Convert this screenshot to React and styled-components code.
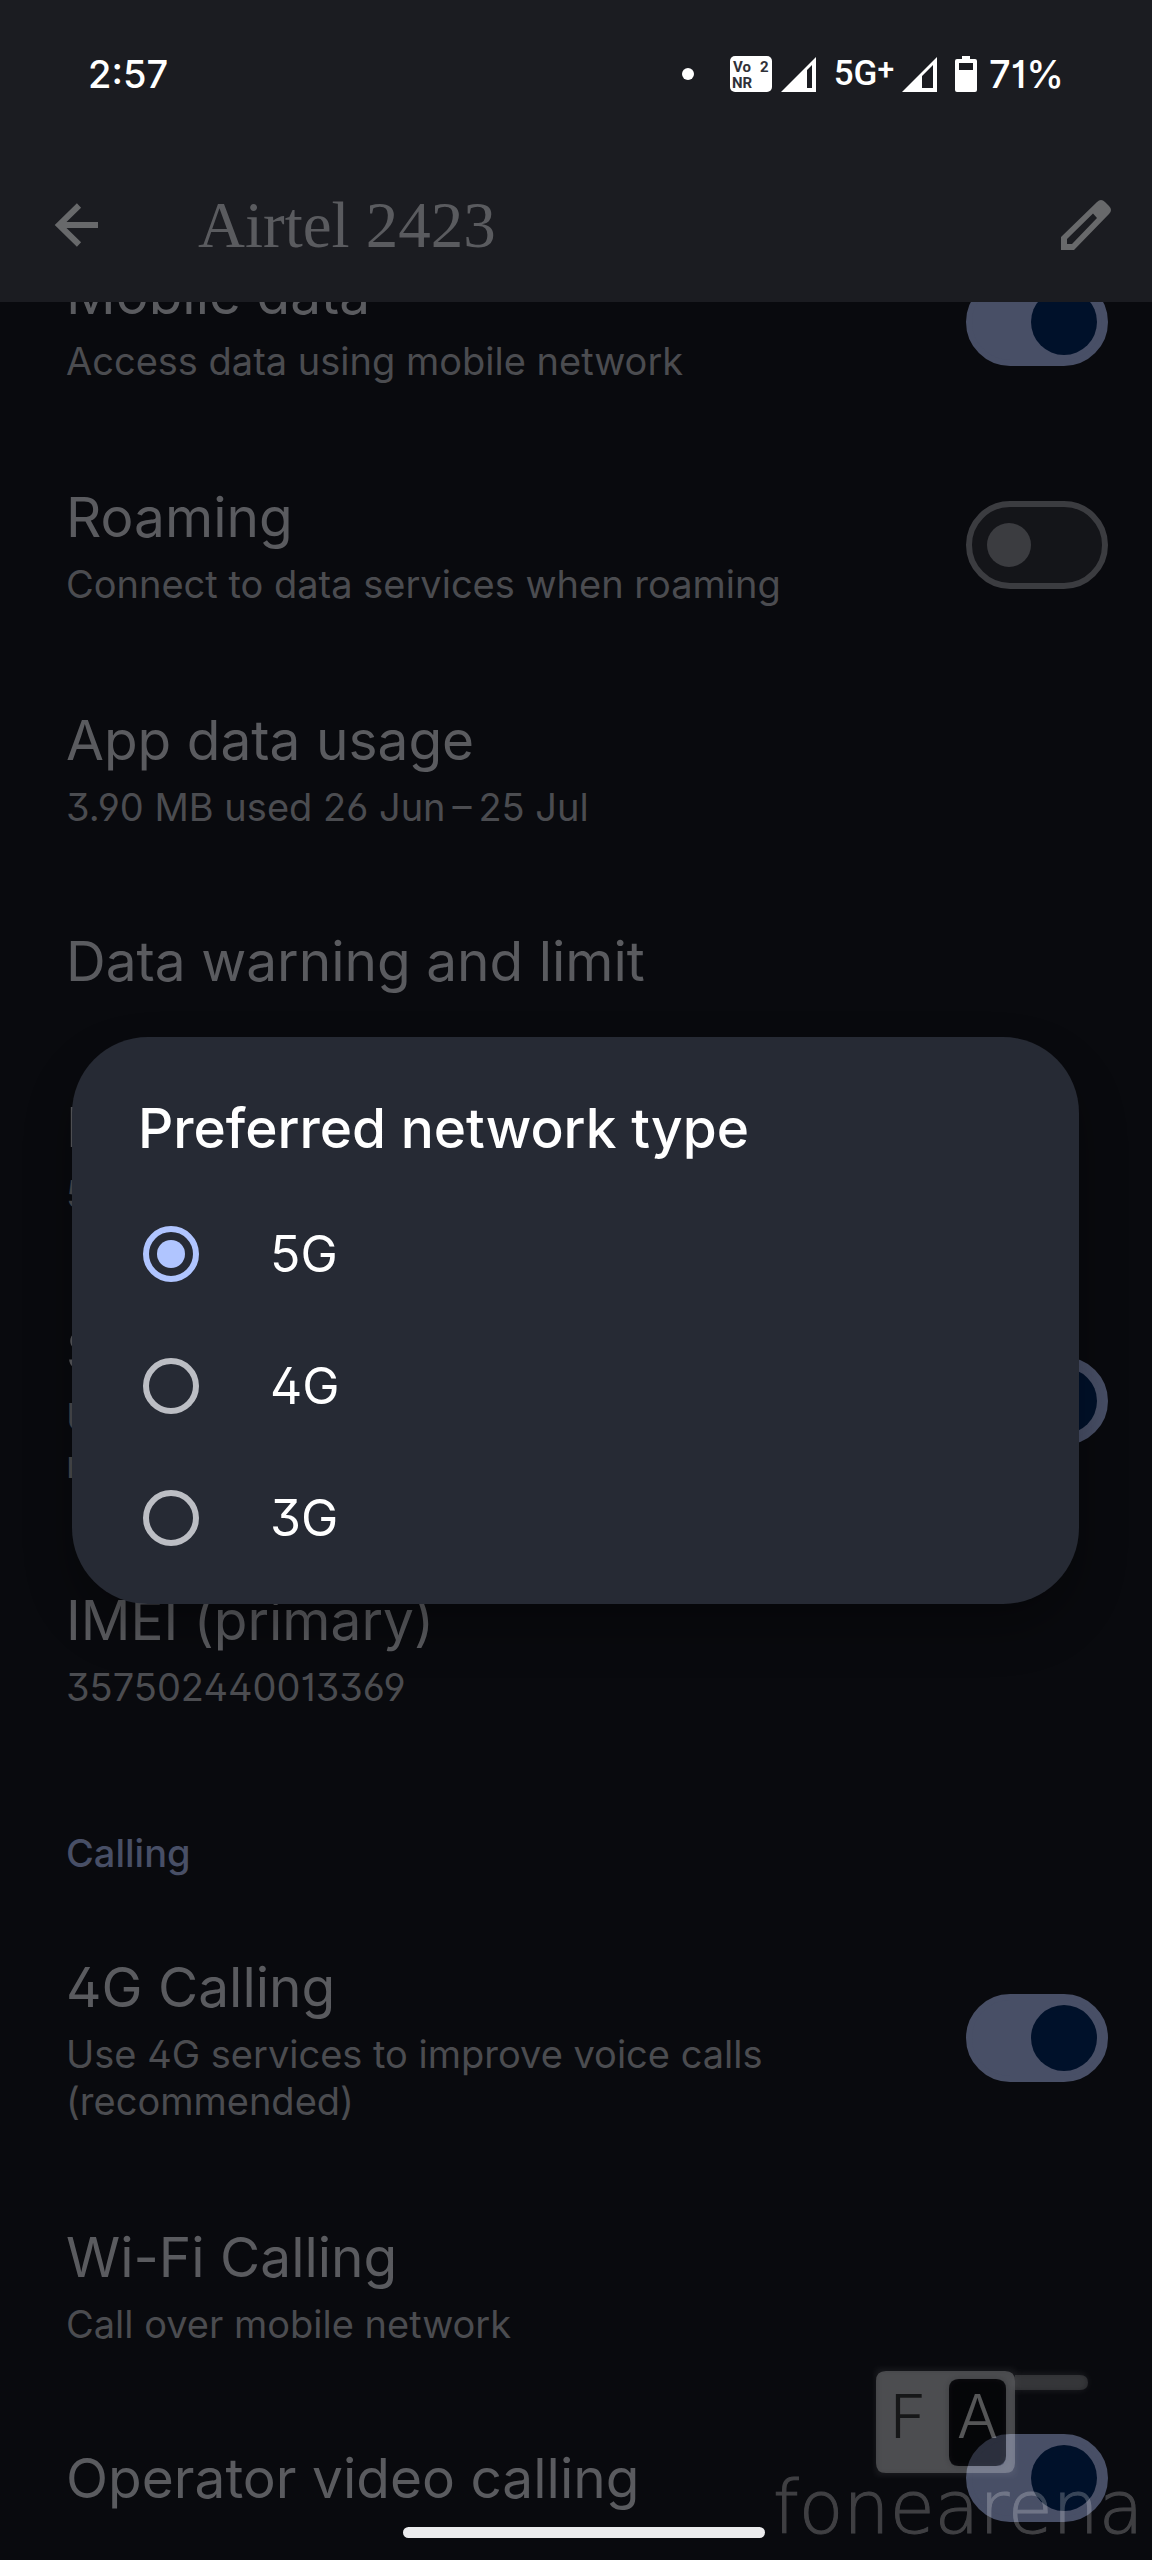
import React, { useState } from 'react'
import styled, { createGlobalStyle, css } from 'styled-components'

const GlobalStyle = createGlobalStyle`
  * {
    box-sizing: border-box;
  }
  body {
    margin: 0;
    background-color: #090a0e;
    font-family: Inter, "Liberation Sans", sans-serif;
    font-feature-settings: "cv01", "cv02", "cv03", "cv04", "cv09";
  }
`

const Page = styled.div`
  position: relative;
  min-height: 100vh;
  overflow: hidden;
  background-color: #090a0e;
`

const Header = styled.header`
  position: sticky;
  top: 0;
  z-index: 1;
  background-color: #1b1c21;
`
const StatusBar = styled.div`
  display: flex;
  align-items: center;
  justify-content: space-between;
  height: 148px;
  padding: 0 88px;
  color: #fff;
  font-size: 38px;
  font-weight: 500;
  line-height: 48px;
`
const StatusIcons = styled.div`
  display: flex;
  align-items: center;
  gap: 36px;
`
const StatusGroup = styled.div`
  display: flex;
  align-items: center;
  gap: ${props => props.$gap}px;
`
const Dot = styled.span`
  width: 12px;
  height: 12px;
  border-radius: 50%;
  background-color: #fff;
`
const NetworkLabel = styled.span`
  display: flex;
  font-family: Roboto, sans-serif;
  font-size: 35px;
`
const Plus = styled.span`
  font-size: 30px;
  line-height: 38px;
`
const AppBar = styled.div`
  display: flex;
  align-items: center;
  height: 154px;
  padding: 0 40px 0 44px;
`
const IconButton = styled.button`
  display: flex;
  padding: 0;
  border: 0;
  background: none;
  color: #68696b;
`
const AppTitle = styled.h1`
  flex: 1;
  margin: 0 0 0 90px;
  color: #5a5b5f;
  font-family: "Liberation Serif", serif;
  font-size: 65px;
  font-weight: 400;
  line-height: 80px;
`

// The list is scrolled a little way under the header
const List = styled.main`
  margin-top: -92px;
`
const rowStyle = css`
  display: flex;
  align-items: center;
  justify-content: space-between;
  gap: 40px;
  width: 100%;
  min-height: 164px;
  padding: ${props => props.$single ? "38px" : "48px"} 44px ${props => props.$single ? "38px" : "48px"} 66px;
`
const LabelRow = styled.label`
  ${rowStyle}
`
const ButtonRow = styled.button`
  ${rowStyle}
  border: 0;
  background: none;
  font: inherit;
  font-feature-settings: inherit;
  text-align: left;
`
const RowText = styled.span`
  display: flex;
  flex-direction: column;
  gap: 8px;
`
const RowTitle = styled.span`
  color: #5a5b5f;
  font-size: 55px;
  line-height: 72px;
`
const RowSummary = styled.span`
  color: #4b4c50;
  font-size: 38px;
  line-height: 47px;
`
const SectionTitle = styled.h2`
  margin: 0;
  padding: 71px 66px 26px;
  color: #484f66;
  font-size: 38px;
  font-weight: 500;
  line-height: 47px;
`
const Switch = styled.input`
  appearance: none;
  flex: none;
  display: flex;
  align-items: center;
  width: 142px;
  height: 88px;
  margin: 0;
  padding: 0 15px;
  border: 6px solid #3b3c40;
  border-radius: 44px;
  background-color: #141519;

  &::before {
    content: "";
    width: 44px;
    height: 44px;
    border-radius: 50%;
    background-color: #3b3c40;
  }
  &:checked {
    justify-content: flex-end;
    padding: 0 5px;
    border-color: #484f66;
    background-color: #484f66;
  }
  &:checked::before {
    width: 66px;
    height: 66px;
    background-color: #00112a;
  }
`

const Overlay = styled.div`
  position: fixed;
  inset: 0;
  z-index: 2;
  display: flex;
  align-items: center;
  padding: 81px 73px 0 72px;
`
const Dialog = styled.fieldset`
  flex: 1;
  min-width: 0;
  margin: 0;
  padding: 55px 0 20px;
  border: 0;
  border-radius: 76px;
  background-color: #262a34;
  box-shadow: 0 24px 48px rgba(0, 0, 0, 0.3);
`
const DialogTitle = styled.h2`
  margin: 0 0 24px;
  padding: 0 66px;
  color: #fff;
  font-size: 55px;
  font-weight: 500;
  line-height: 72px;
`
const Option = styled.label`
  display: flex;
  align-items: center;
  gap: 71px;
  height: 132px;
  padding: 0 71px;
  color: #fff;
  font-size: 50px;
  line-height: 60px;
`
const Radio = styled.input`
  appearance: none;
  display: flex;
  align-items: center;
  justify-content: center;
  width: 56px;
  height: 56px;
  margin: 0;
  border: 6px solid #bcbec4;
  border-radius: 50%;

  &:checked {
    border-color: #b0c5ff;
  }
  &:checked::before {
    content: "";
    width: 28px;
    height: 28px;
    border-radius: 50%;
    background-color: #b0c5ff;
  }
`

const HomeBar = styled.div`
  position: fixed;
  bottom: 22px;
  left: 35%;
  z-index: 3;
  width: 362px;
  height: 11px;
  border-radius: 6px;
  background-color: #ebebed;
`
const Watermark = styled.svg`
  position: fixed;
  right: 0;
  bottom: 0;
  z-index: 3;
  pointer-events: none;
`

const VoNrIcon = () => (
  <svg width="42" height="36" viewBox="0 0 42 36" fontFamily="Roboto, sans-serif" fontSize="15" fontWeight="700" fill="#303138">
    <rect width="42" height="36" rx="5" fill="#fff" />
    <text x="3" y="16">Vo</text>
    <text x="30" y="16">2</text>
    <text x="2" y="32">NR</text>
  </svg>
)

const SignalIcon = ({ level }) => (
  <svg width="35" height="35" viewBox="0 0 35 35">
    <path fill="#fff" fillRule="evenodd" d={`M0 35 35 0V35ZM${level} ${39 - level}V31H31V8Z`} />
  </svg>
)

const BatteryIcon = () => (
  <svg width="22" height="36" viewBox="0 0 22 36">
    <path fill="#fff" fillRule="evenodd" d="M7 0H15V3H20Q22 3 22 5V34Q22 36 20 36H2Q0 36 0 34V5Q0 3 2 3H7ZM4 7V14H18V7Z" />
  </svg>
)

const BackIcon = () => (
  <svg width="64" height="64" viewBox="0 0 64 64" fill="none" stroke="currentColor" strokeWidth="6">
    <path d="M54 32H15M35 12.500 15 32 35 51.500" />
  </svg>
)

const EditIcon = () => (
  <svg width="52" height="52" viewBox="0 0 52 52">
    <path
      fill="currentColor"
      fillRule="evenodd"
      d="M1 51V38L37 3Q41-1 45 3L49 7Q53 11 49 15L14 51ZM7 40V45H12L37 19 33 14.500Z"
    />
  </svg>
)

const rows = [
  { title: "Mobile data", summary: "Access data using mobile network", on: true },
  { title: "Roaming", summary: "Connect to data services when roaming", on: false },
  { title: "App data usage", summary: "3.90 MB used 26 Jun\u2009–\u200925 Jul" },
  { title: "Data warning and limit" },
  { title: "Preferred network type", summary: "5G" },
  { title: "Smart 5G", summary: "Use 5G only when it is needed, which helps reduce battery use", on: true },
  { title: "IMEI (primary)", summary: "357502440013369" },
]

const callingRows = [
  { title: "4G Calling", summary: "Use 4G services to improve voice calls (recommended)", on: true },
  { title: "Wi-Fi Calling", summary: "Call over mobile network" },
  { title: "Operator video calling", on: true },
]

const SettingRow = ({ item }) => {
  const text = (
    <RowText>
      <RowTitle>{item.title}</RowTitle>
      {item.summary && <RowSummary>{item.summary}</RowSummary>}
    </RowText>
  )
  if (item.on === undefined) {
    return <ButtonRow type="button" $single={!item.summary}>{text}</ButtonRow>
  }
  return (
    <LabelRow $single={!item.summary}>
      {text}
      <Switch type="checkbox" role="switch" defaultChecked={item.on} />
    </LabelRow>
  )
}

const App = () => {
  const [network, setNetwork] = useState("5G")

  return (
    <>
      <GlobalStyle />
      <Page>
        <Header>
          <StatusBar>
            <span>2:57</span>
            <StatusIcons>
              <Dot />
              <StatusGroup $gap={18}>
                <StatusGroup $gap={9}>
                  <VoNrIcon />
                  <SignalIcon level={26} />
                </StatusGroup>
                <StatusGroup $gap={8}>
                  <NetworkLabel>5G<Plus>+</Plus></NetworkLabel>
                  <SignalIcon level={20} />
                </StatusGroup>
                <StatusGroup $gap={12}>
                  <BatteryIcon />
                  <span>71%</span>
                </StatusGroup>
              </StatusGroup>
            </StatusIcons>
          </StatusBar>
          <AppBar>
            <IconButton type="button" aria-label="Back"><BackIcon /></IconButton>
            <AppTitle>Airtel 2423</AppTitle>
            <IconButton type="button" aria-label="Edit"><EditIcon /></IconButton>
          </AppBar>
        </Header>
        <List>
          {rows.map(item => <SettingRow key={item.title} item={item} />)}
          <SectionTitle>Calling</SectionTitle>
          {callingRows.map(item => <SettingRow key={item.title} item={item} />)}
        </List>
      </Page>
      <Overlay>
        <Dialog role="dialog" aria-labelledby="network-title">
          <DialogTitle id="network-title">Preferred network type</DialogTitle>
          {["5G", "4G", "3G"].map(type => (
            <Option key={type}>
              <Radio
                type="radio"
                name="network"
                checked={network === type}
                onChange={() => setNetwork(type)}
              />
              {type}
            </Option>
          ))}
        </Dialog>
      </Overlay>
      <HomeBar />
      <Watermark width="402" height="230" viewBox="0 0 402 230">
        <defs>
          <filter id="glow" x="-20%" y="-20%" width="140%" height="140%">
            <feGaussianBlur stdDeviation="3" />
          </filter>
        </defs>
        <rect x="262" y="43" width="76" height="18" rx="9" fill="#fff" fillOpacity="0.07" filter="url(#glow)" />
        <path d="M265 45H330Q338 45 338 52.500T330 60H265Z" fill="#fff" fillOpacity="0.12" />
        <path
          d="M126 39H265V145H126ZM209 49Q199 49 199 59V126Q199 136 209 136H246Q256 136 256 126V59Q256 49 246 49Z"
          fill="#fff"
          fillOpacity="0.07"
          fillRule="evenodd"
          filter="url(#glow)"
        />
        <path
          d="M136 41H255Q265 41 265 51V133Q265 143 255 143H136Q126 143 126 133V51Q126 41 136 41ZM209 49Q199 49 199 59V126Q199 136 209 136H246Q256 136 256 126V59Q256 49 246 49Z"
          fill="#fff"
          fillOpacity="0.22"
          fillRule="evenodd"
        />
        <rect x="199" y="49" width="57" height="87" rx="10" fill="#000" fillOpacity="0.4" />
        <g fontFamily="Inter, sans-serif" fontSize="61" fontWeight="300">
          <text x="140" y="108" fill="#000" fillOpacity="0.7">F</text>
          <text x="207" y="108" fill="#fff" fillOpacity="0.32">A</text>
        </g>
        <text
          x="23"
          y="203"
          fontFamily="DejaVu Sans, sans-serif"
          fontSize="73"
          fontWeight="200"
          fill="#fff"
          stroke="#fff"
          opacity="0.22"
        >
          fonearena
        </text>
      </Watermark>
    </>
  )
}

export default App
